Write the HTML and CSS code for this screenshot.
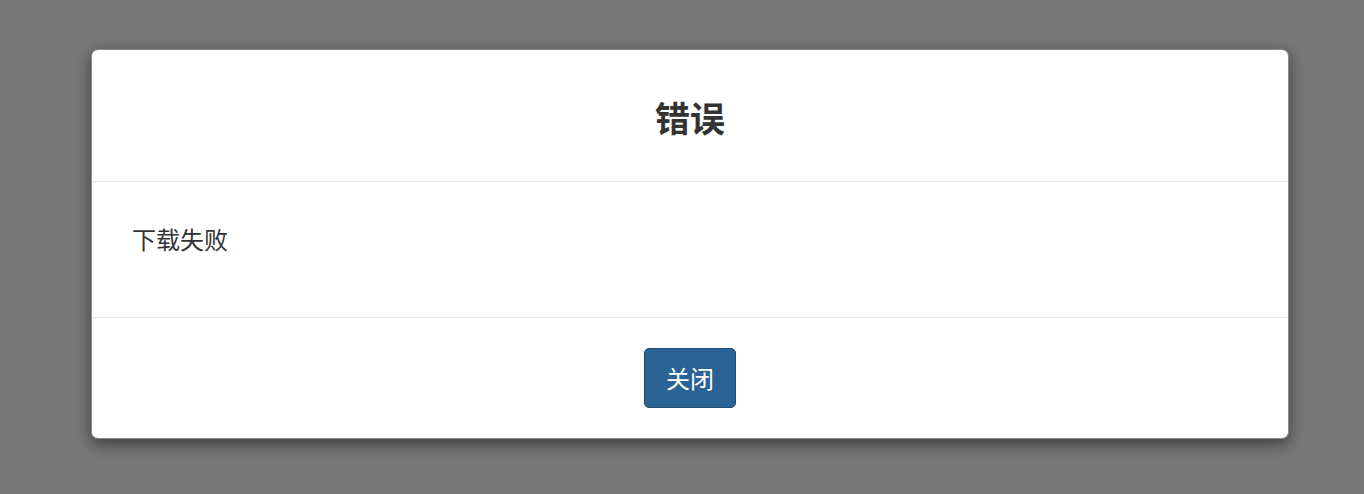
FILE: index.html
```html
<!DOCTYPE html>
<html lang="zh">
<head>
<meta charset="utf-8">
<title>错误</title>
<link rel="stylesheet" href="styles.css">
</head>
<body>
<div class="backdrop">
  <div class="modal">
    <div class="modal-header">
      <h3 class="modal-title">错误</h3>
    </div>
    <div class="modal-body">
      <p class="message">下载失败</p>
    </div>
    <div class="modal-footer">
      <button class="btn-close" type="button">关闭</button>
    </div>
  </div>
</div>
</body>
</html>
```

FILE: styles.css
```css
html, body {
  margin: 0;
  padding: 0;
  height: 100%;
}
body {
  background: #777777;
  font-family: "Noto Sans CJK SC", "Noto Sans", sans-serif;
  color: #333333;
}
.backdrop {
  padding: 49px 75px 0 91px;
}
.modal {
  background: #ffffff;
  border: 1px solid rgba(0, 0, 0, 0.45);
  border-radius: 7px;
  box-shadow: 0 5px 15px rgba(0, 0, 0, 0.5);
  overflow: hidden;
}
.modal-header {
  height: 131px;
  display: flex;
  align-items: center;
  justify-content: center;
  border-bottom: 1px solid #e5e5e5;
}
.modal-title {
  margin: 0;
  font-size: 35px;
  font-weight: 700;
  line-height: 1;
  color: #333333;
  padding-top: 1px;
}
.modal-body {
  height: 136px;
  padding: 0 40px;
  box-sizing: border-box;
  border-bottom: 1px solid #e5e5e5;
}
.message {
  margin: 0;
  padding-top: 40px;
  font-size: 24px;
  line-height: 34px;
  color: #333333;
}
.modal-footer {
  height: 120px;
  display: flex;
  align-items: center;
  justify-content: center;
}
.btn-close {
  width: 92px;
  height: 60px;
  background: #2b6395;
  border: 1px solid #1f4a73;
  border-radius: 5px;
  color: #ffffff;
  font-family: "Noto Sans CJK SC", "Noto Sans", sans-serif;
  font-size: 24px;
  line-height: 1;
  padding: 0;
  cursor: pointer;
}
```
